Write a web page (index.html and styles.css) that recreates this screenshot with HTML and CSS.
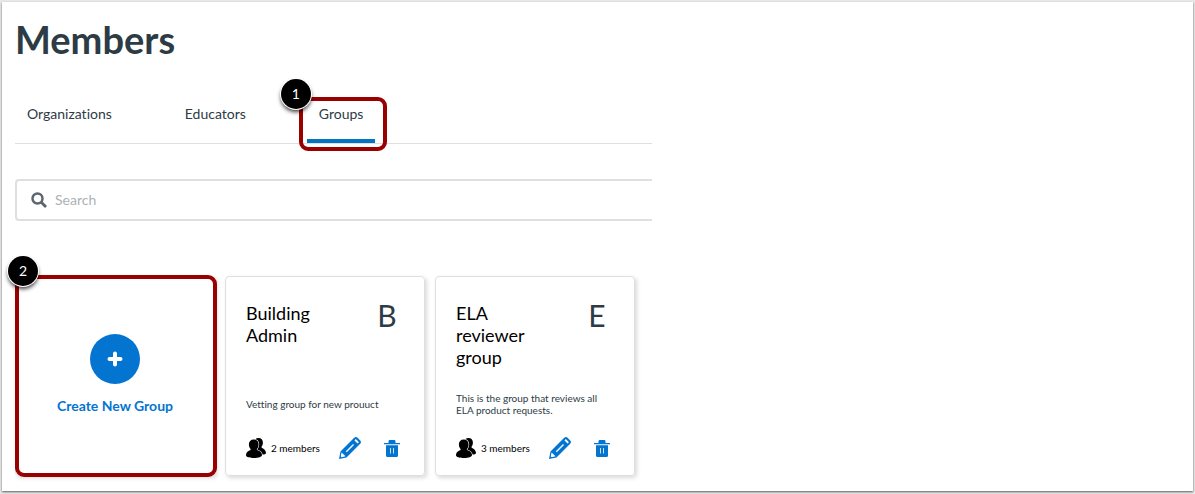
FILE: index.html
```html
<!DOCTYPE html>
<html lang="en">
<head>
    <meta charset="UTF-8">
    <meta name="viewport" content="width=device-width, initial-scale=1.0">
    <title>Members</title>
    <link rel="stylesheet" href="styles.css">
</head>
<body>
    <svg class="icons" aria-hidden="true">
        <symbol id="users" viewBox="0 0 20 20">
            <path d="M12.500 0c2.800 0 4.400 1.900 4.400 4.500 0 1.700-.4 3-1.300 4v1.200c2 .8 4.100 2.300 4.400 5.100.1 1-.8 1.700-2 1.700h-5L8 5c0-3 1.700-5 4.500-5z"/>
            <path stroke="#fff" stroke-width="1.200" paint-order="stroke" d="M7.700 1.500c3.200 0 4.900 2.100 4.900 5.100 0 1.800-.6 3.300-1.700 4.400v1c2.300.8 5 1.900 5.100 5 .1 2.100-3.600 3-7.900 3S-.1 19.200 0 17.100c.1-3.100 2.300-4.300 4.600-5.100v-1C3.500 9.900 2.900 8.400 2.900 6.600c0-3 1.700-5.100 4.800-5.100z"/>
        </symbol>
        <symbol id="pencil" viewBox="0 0 22 22">
            <path d="M0 22l1.500-7.500L15.200.8c1-1 2.400-1 3.400 0l2.600 2.600c1 1 1 2.400 0 3.400L7.500 20.500z"/>
            <path fill="#fff" d="M16.800 2.100l3.100 3.100-1.300 1.300-3.100-3.100zM2.600 15.500l3.900 3.700-3.800 1-1-1z"/>
            <path stroke="#fff" stroke-width="1.300" d="M7.300 14.700l7.200-7.200"/>
        </symbol>
        <symbol id="trash" viewBox="0 0 16 17">
            <path d="M0 3h4.500V1.500C4.500.5 5 0 6 0h4c1 0 1.500.5 1.500 1.500V3H16v1.200H0zM2 5.200h12v10.300c0 .8-.5 1.500-1.500 1.500h-9c-1 0-1.500-.7-1.500-1.500z"/>
            <path stroke="#fff" stroke-width=".8" d="M6.500 8v5.500M9.500 8v5.500"/>
        </symbol>
    </svg>

    <main class="page">
        <div class="content">
            <h1>Members</h1>
            <nav class="tabs">
                <a href="#">Organizations</a>
                <a href="#">Educators</a>
                <a href="#" class="active">Groups
                    <span class="outline outline-tab"></span>
                    <span class="badge badge-tab">1</span>
                </a>
            </nav>

            <label class="search">
                <svg viewBox="0 0 16 16" width="16" height="16" aria-hidden="true">
                    <circle cx="6.500" cy="6.500" r="5" fill="none" stroke="#5c6570" stroke-width="2.500"/>
                    <path stroke="#5c6570" stroke-width="2.800" d="M10 10l5 5"/>
                </svg>
                <input type="search" placeholder="Search" aria-label="Search">
            </label>

            <div class="cards">
                <div class="card">
                    <button type="button" class="create">
                        <span class="plus">
                            <svg viewBox="0 0 16 16" width="16" height="16" aria-hidden="true"><path stroke="#fff" stroke-width="4" stroke-linecap="round" d="M8 2.500v11M2.500 8h11"/></svg>
                        </span>
                        Create New Group
                    </button>
                    <span class="outline outline-card"></span>
                    <span class="badge badge-card">2</span>
                </div>
                <article class="card group">
                    <header>
                        <h2>Building Admin</h2>
                        <span class="letter">B</span>
                    </header>
                    <p>Vetting group for new prouuct</p>
                    <footer>
                        <svg class="users" aria-hidden="true"><use href="#users"/></svg>
                        <span class="count">2 members</span>
                        <button type="button" aria-label="Edit"><svg class="pencil"><use href="#pencil"/></svg></button>
                        <button type="button" aria-label="Delete"><svg class="trash"><use href="#trash"/></svg></button>
                    </footer>
                </article>
                <article class="card group">
                    <header>
                        <h2>ELA reviewer group</h2>
                        <span class="letter">E</span>
                    </header>
                    <p>This is the group that reviews all ELA product requests.</p>
                    <footer>
                        <svg class="users" aria-hidden="true"><use href="#users"/></svg>
                        <span class="count">3 members</span>
                        <button type="button" aria-label="Edit"><svg class="pencil"><use href="#pencil"/></svg></button>
                        <button type="button" aria-label="Delete"><svg class="trash"><use href="#trash"/></svg></button>
                    </footer>
                </article>
            </div>
        </div>
    </main>
</body>
</html>
```
FILE: styles.css
```css
*{
    margin: 0;padding: 0;box-sizing: border-box;
}
body{
    padding: 2px 2px 3px;
    background-color: #e8e8e8;
    font-family: Lato, "Liberation Sans", sans-serif;
    font-variant-ligatures: none;
    color: #2d3b45;
}
button{
    border: none;
    background: none;
    font-family: inherit;
    color: #0374d0;
    cursor: pointer;
}
.icons{
    display: none;
}
.page{
    padding: 14px 13px 15px;
    background-color: white;
    box-shadow: 0 1px 2px rgba(0, 0, 0, 0.6);
}
.content{
    max-width: 637px;
}
h1{
    font-size: 38px;
    line-height: 46px;
}

/* tabs */
.tabs{
    display: flex;
    gap: 49px;
    margin-top: 35px;
    border-bottom: 1px solid #dfdfdf;
}
.tabs a{
    padding: 8px 12px 16px;
    border-bottom: 4px solid transparent;
    font-size: 14px;
    line-height: 18px;
    color: inherit;
    text-decoration: none;
}
.tabs .active{
    position: relative;
    border-color: #0374bf;
}

/* search */
.search{
    display: flex;
    align-items: center;
    gap: 8px;
    height: 42px;
    margin-top: 35px;
    padding-left: 14px;
    border: 2px solid #dfdfdf;
    border-right: none;
    border-radius: 4px 0 0 4px;
}
.search input{
    flex: 1;
    border: none;
    outline: none;
    font-family: inherit;
    font-size: 14px;
    line-height: 18px;
}
.search input::placeholder{
    color: #adb1b5;
}

/* cards */
.cards{
    display: flex;
    gap: 10px;
    margin-top: 55px;
}
.card{
    position: relative;
    width: 200px;
    min-height: 200px;
    border: 1px solid #dfdfdf;
    border-radius: 4px;
    box-shadow: 2px 2px 4px rgba(0, 0, 0, 0.15);
}
.create{
    display: flex;
    flex-direction: column;
    align-items: center;
    justify-content: center;
    gap: 12px;
    width: 100%;
    height: 100%;
    padding-bottom: 2px;
    font-size: 14px;
    font-weight: bold;
    line-height: 20px;
}
.plus{
    display: flex;
    align-items: center;
    justify-content: center;
    width: 50px;
    height: 50px;
    border-radius: 50%;
    background-color: #0374d0;
}
.group{
    display: flex;
    flex-direction: column;
    padding: 25px 20px 16px;
}
.group header{
    display: flex;
    justify-content: space-between;
    height: 84px;
}
.group h2{
    width: 90px;
    font-size: 18px;
    font-weight: normal;
    line-height: 22px;
    color: black;
}
.letter{
    width: 34px;
    font-size: 30px;
    line-height: 26px;
    text-align: center;
}
.group p{
    display: flex;
    align-items: center;
    height: 36px;
    font-size: 10px;
    line-height: 12px;
}
.group footer{
    display: flex;
    align-items: center;
    height: 22px;
    margin-top: auto;
}
.group svg{
    display: block;
    fill: currentColor;
}
.group footer button{
    margin-left: 19px;
}
.group footer button:last-child{
    margin-left: 23px;
}
.users{
    width: 20px;
    height: 20px;
    color: black;
}
.pencil{
    width: 22px;
    height: 22px;
}
.trash{
    width: 16px;
    height: 17px;
}
.count{
    margin-left: 5px;
    font-size: 10px;
    color: black;
}

/* numbered callouts */
.outline{
    position: absolute;
    border: 4px solid #990000;
    border-radius: 9px;
    pointer-events: none;
}
.outline-tab{
    top: 0;
    left: -8px;
    right: -12px;
    bottom: -12px;
}
.outline-card{
    top: -2px;
    left: -1px;
    right: -3px;
    bottom: -2px;
}
.badge{
    position: absolute;
    width: 30px;
    height: 30px;
    border-radius: 50%;
    background-color: black;
    box-shadow: 0 0 0 1px white, 0 3px 4px rgba(0, 0, 0, 0.8);
    font-size: 14px;
    line-height: 30px;
    text-align: center;
    color: white;
}
.badge-tab{
    top: -18px;
    left: -26px;
}
.badge-card{
    top: -21px;
    left: -8px;
}
```
